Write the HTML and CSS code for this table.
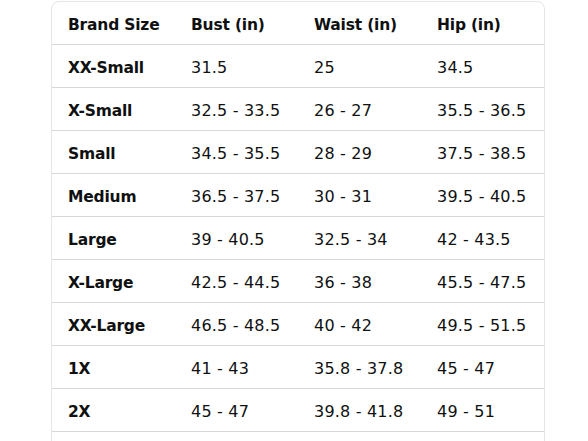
FILE: index.html
```html
<!DOCTYPE html>
<html>
<head>
<meta charset="utf-8">
<link rel="stylesheet" href="styles.css">
</head>
<body>
<div class="page">
  <div class="card">
    <table class="chart">
      <thead>
        <tr><th>Brand Size</th><th>Bust (in)</th><th>Waist (in)</th><th>Hip (in)</th></tr>
      </thead>
      <tbody>
        <tr><th>XX-Small</th><td>31.5</td><td>25</td><td>34.5</td></tr>
        <tr><th>X-Small</th><td>32.5 - 33.5</td><td>26 - 27</td><td>35.5 - 36.5</td></tr>
        <tr><th>Small</th><td>34.5 - 35.5</td><td>28 - 29</td><td>37.5 - 38.5</td></tr>
        <tr><th>Medium</th><td>36.5 - 37.5</td><td>30 - 31</td><td>39.5 - 40.5</td></tr>
        <tr><th>Large</th><td>39 - 40.5</td><td>32.5 - 34</td><td>42 - 43.5</td></tr>
        <tr><th>X-Large</th><td>42.5 - 44.5</td><td>36 - 38</td><td>45.5 - 47.5</td></tr>
        <tr><th>XX-Large</th><td>46.5 - 48.5</td><td>40 - 42</td><td>49.5 - 51.5</td></tr>
        <tr><th>1X</th><td>41 - 43</td><td>35.8 - 37.8</td><td>45 - 47</td></tr>
        <tr><th>2X</th><td>45 - 47</td><td>39.8 - 41.8</td><td>49 - 51</td></tr>
        <tr class="tail"><th></th><td></td><td></td><td></td></tr>
      </tbody>
    </table>
  </div>
</div>
</body>
</html>
```
FILE: styles.css
```css
html, body {
  margin: 0;
  padding: 0;
  background: #ffffff;
}
body {
  font-family: "DejaVu Sans", sans-serif;
  color: #0f1111;
  overflow: hidden;
}
.page {
  padding: 1px 0 0 51px;
  height: 440px;
  overflow: hidden;
}
.card {
  width: 492px;
  border: 1px solid #e3e6e6;
  border-radius: 8px 8px 0 0;
  overflow: hidden;
}
.chart {
  border-collapse: separate;
  border-spacing: 0;
  width: 492px;
  table-layout: fixed;
}
.chart th, .chart td {
  height: 39px;
  padding: 3px 0 0 16px;
  border-bottom: 1px solid #d5d9d9;
  text-align: left;
  line-height: 20px;
  white-space: nowrap;
  vertical-align: middle;
}
.chart th {
  font-size: 15.5px;
  font-weight: 700;
  letter-spacing: -0.2px;
}
.chart td {
  font-size: 16px;
  font-weight: 400;
  letter-spacing: 0.2px;
}
```
